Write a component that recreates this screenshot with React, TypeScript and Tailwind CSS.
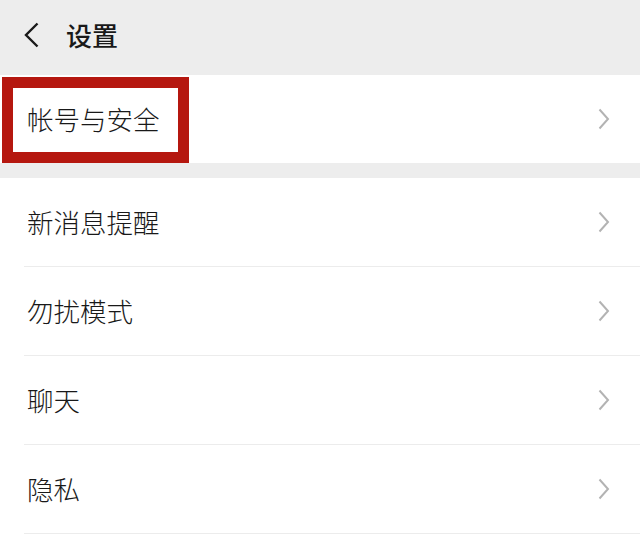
import React from 'react';

const font = { fontFamily: '"Noto Sans CJK SC", "Noto Sans", sans-serif' };

function Chevron() {
  return (
    <svg width="12" height="22" viewBox="0 0 12 22" className="shrink-0">
      <path d="M1.5 1.5 L10 11 L1.5 20.5" fill="none" stroke="#b3b3b3" strokeWidth="2" />
    </svg>
  );
}

const items = ['新消息提醒', '勿扰模式', '聊天', '隐私'];

export default function App() {
  return (
    <div className="w-[640px] h-[549px] bg-white overflow-hidden" style={font}>
      {/* Header */}
      <div className="h-[75px] bg-[#ededed] flex items-center pl-[24px] pb-[5px]">
        <svg width="16" height="26" viewBox="0 0 16 26">
          <path d="M13.5 1.5 L2 13 L13.5 24.5" fill="none" stroke="#1a1a1a" strokeWidth="2.4" />
        </svg>
        <span className="ml-[26px] text-[26px] leading-none text-[#191919] font-medium">设置</span>
      </div>

      {/* Account row, highlighted */}
      <div className="relative h-[88px] bg-white flex items-center justify-between pl-[27px] pr-[30px]">
        <span className="text-[26.5px] leading-none text-[#191919] font-light">帐号与安全</span>
        <Chevron />
        <div className="absolute left-[2px] top-[2px] w-[187px] h-[86px] border-[11px] border-[#b5170f]" />
      </div>

      <div className="h-[15px] bg-[#ededed]" />

      {/* List */}
      <div className="bg-white">
        {items.map((t) => (
          <div key={t} className="ml-[24px] h-[89px] border-b border-[#ececec] flex items-center justify-between pl-[3px] pr-[30px]">
            <span className="text-[26.5px] leading-none text-[#191919] font-light">{t}</span>
            <Chevron />
          </div>
        ))}
      </div>
    </div>
  );
}
